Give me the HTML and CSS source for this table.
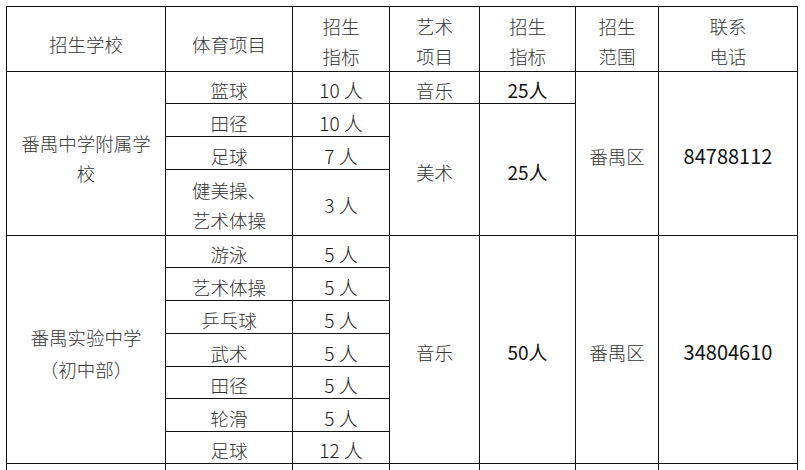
FILE: index.html
```html
<!DOCTYPE html>
<html lang="zh-CN">
<head>
<meta charset="utf-8">
<title>招生学校</title>
<link rel="stylesheet" href="styles.css">
</head>
<body>
<table class="grid">
  <colgroup>
    <col class="c1"><col class="c2"><col class="c3"><col class="c4"><col class="c5"><col class="c6"><col class="c7">
  </colgroup>
  <tr class="head">
    <td class="one">招生学校</td>
    <td class="one">体育项目</td>
    <td>招生<br>指标</td>
    <td>艺术<br>项目</td>
    <td>招生<br>指标</td>
    <td>招生<br>范围</td>
    <td>联系<br>电话</td>
  </tr>
  <tr class="r32">
    <td rowspan="4" class="school s1">番禺中学附属学<br>校</td>
    <td>篮球</td>
    <td class="num">10 人</td>
    <td>音乐</td>
    <td class="num strong">25人</td>
    <td rowspan="4">番禺区</td>
    <td rowspan="4" class="num phone">84788112</td>
  </tr>
  <tr class="r33">
    <td>田径</td>
    <td class="num">10 人</td>
    <td rowspan="3">美术</td>
    <td rowspan="3" class="num strong">25人</td>
  </tr>
  <tr class="r33">
    <td>足球</td>
    <td class="num">7 人</td>
  </tr>
  <tr class="r66">
    <td class="two">健美操、<br>艺术体操</td>
    <td class="num">3 人</td>
  </tr>
  <tr class="r32">
    <td rowspan="7" class="school s2">番禺实验中学<br>（初中部）</td>
    <td>游泳</td>
    <td class="num">5 人</td>
    <td rowspan="7">音乐</td>
    <td rowspan="7" class="num strong">50人</td>
    <td rowspan="7">番禺区</td>
    <td rowspan="7" class="num phone">34804610</td>
  </tr>
  <tr class="r33"><td>艺术体操</td><td class="num">5 人</td></tr>
  <tr class="r33"><td>乒乓球</td><td class="num">5 人</td></tr>
  <tr class="r33"><td>武术</td><td class="num">5 人</td></tr>
  <tr class="r32"><td>田径</td><td class="num">5 人</td></tr>
  <tr class="r33"><td>轮滑</td><td class="num">5 人</td></tr>
  <tr class="r32"><td>足球</td><td class="num">12 人</td></tr>
  <tr class="r40"><td></td><td></td><td></td><td></td><td></td><td></td><td></td></tr>
</table>
</body>
</html>
```

FILE: styles.css
```css
html, body {
  margin: 0;
  padding: 0;
  background: #ffffff;
}

body {
  font-family: "Noto Sans CJK SC", "Noto Sans", sans-serif;
  color: #333333;
  overflow: hidden;
}

.grid {
  margin: 6px 0 0 6px;
  border-collapse: collapse;
  table-layout: fixed;
  width: 792px;
}

.c1 { width: 159px; }
.c2 { width: 127px; }
.c3 { width: 97px; }
.c4 { width: 90px; }
.c5 { width: 96px; }
.c6 { width: 83px; }
.c7 { width: 139px; }

.grid td {
  border: 1px solid #111111;
  text-align: center;
  vertical-align: middle;
  padding: 5px 0 0 0;
  font-size: 18.5px;
  font-weight: 300;
  line-height: 22px;
  white-space: nowrap;
}

.head { height: 65px; }
.grid .head td { padding-top: 4px; line-height: 30px; }
.grid .head td.one { padding-top: 9px; line-height: 24px; }
.r32 { height: 32px; }
.r33 { height: 33px; }
.r66 { height: 66px; }
.r40 { height: 40px; }

.grid td.two { line-height: 30px; }
.grid td.s1 { line-height: 30px; padding-top: 8px; }
.grid td.s2 { line-height: 32px; padding-top: 7px; }

.grid td.num {
  color: #1a1a1a;
  font-size: 19px;
}
.grid td.strong {
  font-weight: 400;
  color: #111111;
}
.grid td.phone {
  font-weight: 400;
  color: #111111;
  font-size: 20px;
}
```
